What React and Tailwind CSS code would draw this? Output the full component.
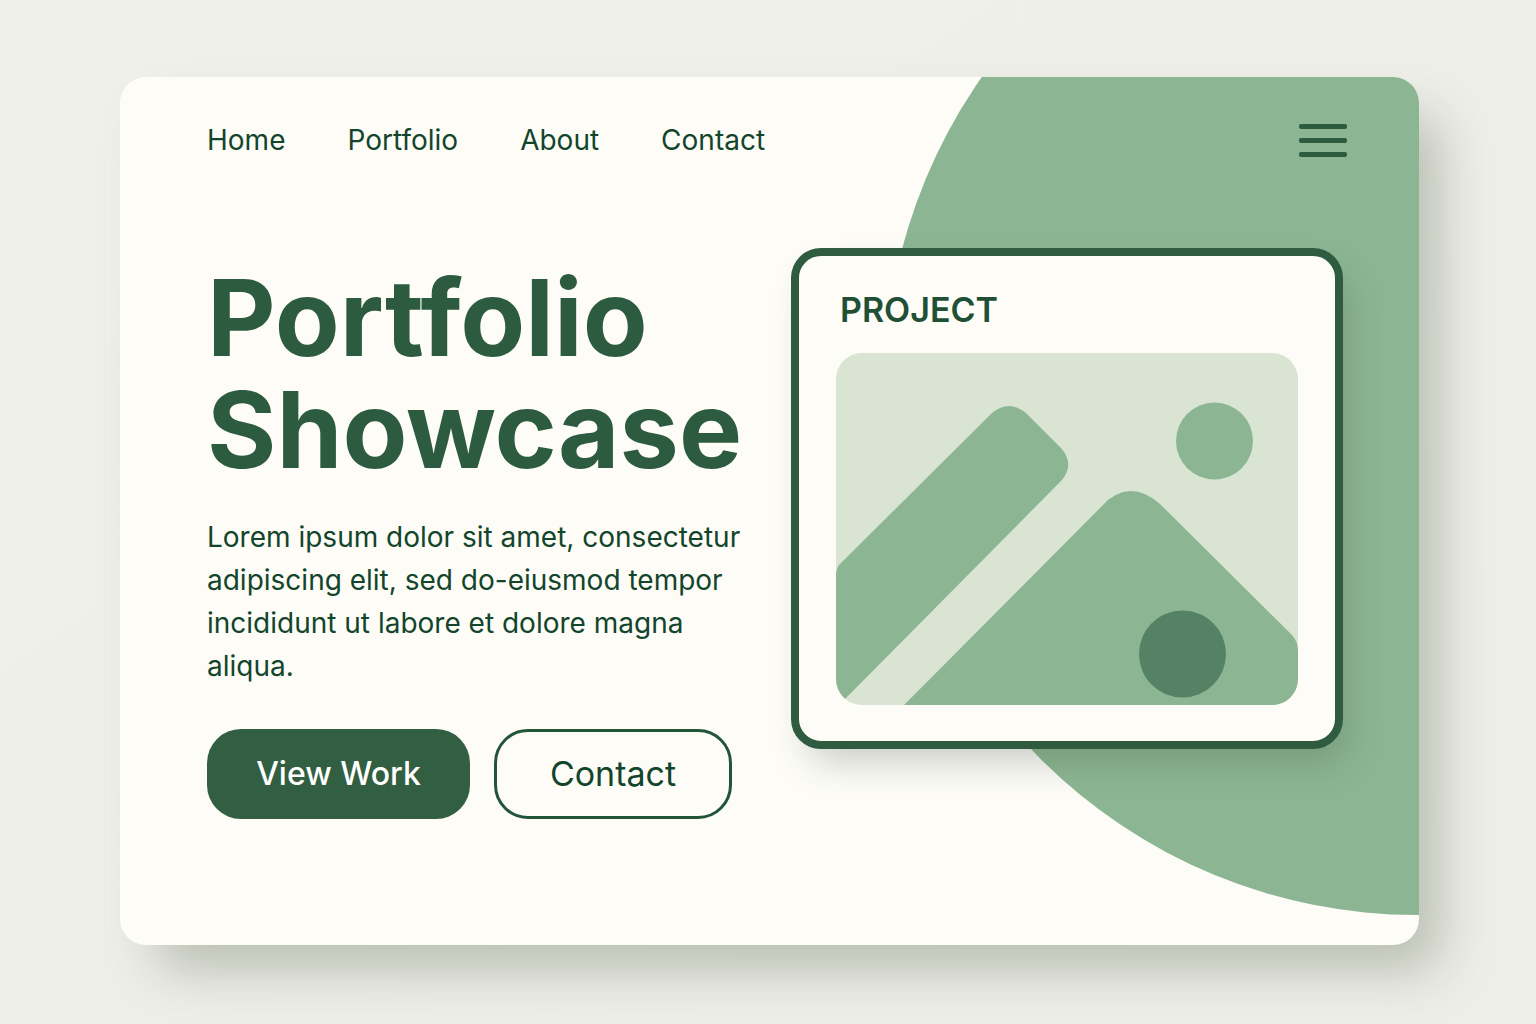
const links = ["Home", "Portfolio", "About", "Contact"];

function ProjectArt() {
  return (
    <svg
      viewBox="0 0 462 352"
      className="block h-auto w-full rounded-[26px] bg-[#d9e4d3]"
      role="img"
      aria-label="Project preview"
    >
      <path
        fill="#8cb693"
        d="M0 222 Q0 214 6 209 L156 60 Q173 46 190 60 L225 95 Q239 111 226 127 L9 346 L0 352 Z"
      />
      <path
        fill="#8cb693"
        d="M68 352 L266 153 Q278 139 294 138 Q310 138 324 151 L455 281 Q462 288 462 298 V352 Z"
      />
      <circle cx="378.500" cy="88" r="38.500" fill="#8cb693" />
      <circle cx="346.500" cy="301" r="43.500" fill="#558264" />
    </svg>
  );
}

export default function App() {
  return (
    <div className="flex min-h-screen flex-col bg-linear-to-br from-[#f0f0eb] to-[#eeeee8] pt-[77px] pr-[117px] pb-[79px] pl-[120px] font-['Inter',sans-serif] text-[#12452b]">
      <div className="relative flex-1 rounded-[26px] bg-[#fdfcf7] shadow-[28px_32px_52px_-8px_rgba(110,122,100,0.42)]">
        <div className="absolute inset-0 overflow-hidden rounded-[26px]" aria-hidden="true">
          <div className="absolute -top-[226px] -right-[530px] size-[1064px] rounded-full bg-[#8cb693]" />
        </div>

        <div className="relative pt-[43px] pr-[76px] pb-[126px] pl-[87px]">
          <header className="-mr-1 flex h-10 items-center justify-between">
            <nav className="flex gap-[62px] text-[28px] leading-10" aria-label="Main">
              {links.map((label) => (
                <a key={label} href="#">
                  {label}
                </a>
              ))}
            </nav>
            <button type="button" aria-label="Menu" className="flex w-12 flex-col gap-[9px]">
              <span className="h-[5px] w-full rounded-xs bg-[#2d5b3f]" />
              <span className="h-[5px] w-full rounded-xs bg-[#2d5b3f]" />
              <span className="h-[5px] w-full rounded-xs bg-[#2d5b3f]" />
            </button>
          </header>

          <main className="mt-22 grid grid-cols-[584fr_552fr] items-start">
            <section className="pt-[14px]">
              <h1 className="text-[106px] leading-[112px] font-bold text-[#2d5b3f]">
                Portfolio
                <br />
                Showcase
              </h1>
              <p className="mt-[30px] text-[28px] leading-[43px]">
                Lorem ipsum dolor sit amet, consectetur
                <br />
                adipiscing elit, sed do-eiusmod tempor
                <br />
                incididunt ut labore et dolore magna
                <br />
                aliqua.
              </p>
              <div className="mt-[41px] flex gap-6 leading-10">
                <button
                  type="button"
                  className="h-[90px] w-[263px] rounded-[34px] bg-[#325e42] text-[32px] font-medium text-white"
                >
                  View Work
                </button>
                <button
                  type="button"
                  className="h-[90px] w-[238px] rounded-[34px] border-3 border-[#225437] text-[34px]"
                >
                  Contact
                </button>
              </div>
            </section>

            <article className="rounded-[30px] border-8 border-[#2f5c41] bg-[#fdfcf7] px-[37px] pt-[34px] pb-9 shadow-[10px_20px_36px_-8px_rgba(60,80,60,0.28)]">
              <h2 className="mb-[23px] pl-1 text-[34px] leading-10 font-semibold text-[#1f5035]">
                PROJECT
              </h2>
              <ProjectArt />
            </article>
          </main>
        </div>
      </div>
    </div>
  );
}
